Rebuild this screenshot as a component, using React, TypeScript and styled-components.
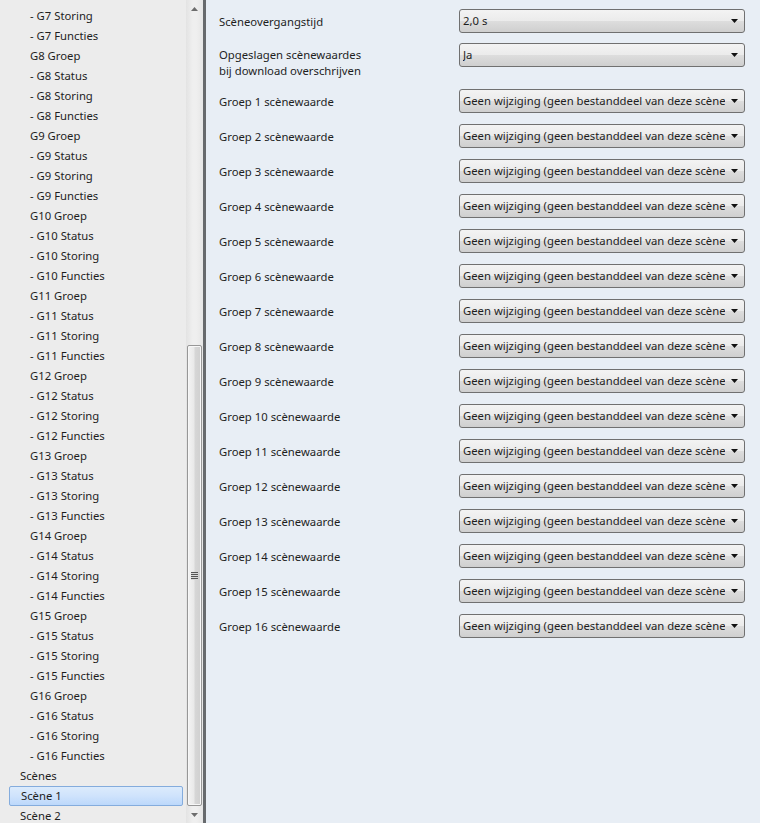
import React from "react";
import styled, { createGlobalStyle } from "styled-components";

const Global = createGlobalStyle`
  html, body { margin: 0; padding: 0; }
  body { font-family: "Noto Sans", "Open Sans", sans-serif; font-size: 11.3px; color: #1e1e1e; overflow: hidden; }
`;

const Shell = styled.div`
  display: flex;
  width: 760px;
  height: 823px;
  overflow: hidden;
`;

const TreePane = styled.div`
  display: flex;
  width: 203px;
  flex: none;
  background: #ececec;
`;

const TreeList = styled.ul`
  list-style: none;
  margin: 0;
  padding: 6px 0 0 0;
  flex: 1;
  overflow: hidden;
`;

const TreeItem = styled.li<{ $level: number; $selected?: boolean }>`
  height: 20px;
  line-height: 20px;
  white-space: nowrap;
  padding-left: ${(p) => (p.$level === 0 ? 20 : 30)}px;
  ${(p) =>
    p.$selected &&
    `
    margin-left: 9px;
    margin-right: 3px;
    padding-left: 11px;
    border: 1px solid #84acdd;
    border-radius: 2px;
    height: 18px;
    line-height: 18px;
    background: linear-gradient(to bottom, #dcebfc 0%, #cfe3fc 50%, #bcd8fb 100%);
  `}
`;

const ScrollBar = styled.div`
  width: 17px;
  flex: none;
  display: flex;
  flex-direction: column;
  background: linear-gradient(to right, #e3e3e3, #efefef 40%, #efefef 60%, #e6e6e6);
`;

const ScrollButton = styled.div`
  height: 17px;
  flex: none;
  display: flex;
  align-items: center;
  justify-content: center;
`;

const ScrollTrack = styled.div<{ $offset: number }>`
  flex: 1;
  display: flex;
  flex-direction: column;
  padding-top: ${(p) => p.$offset}px;
`;

const Thumb = styled.div`
  flex: 1;
  margin: 0 1px;
  border: 1px solid #979797;
  border-radius: 2px;
  background: linear-gradient(to right, #f3f3f3, #e9e9e9 45%, #d6d6d6 55%, #cfcfcf);
  box-shadow: inset 0 0 0 1px #f7f7f7;
  display: flex;
  align-items: center;
  justify-content: center;
`;

const Grip = styled.div`
  width: 7px;
  height: 8px;
  background: repeating-linear-gradient(to bottom, #555 0 1px, #d8d8d8 1px 2px);
`;

const Divider = styled.div`
  width: 3px;
  flex: none;
  background: #676a6d;
`;

const Content = styled.div`
  flex: 1;
  background: #e8eef5;
  padding: 9px 16px 0 13px;
  display: flex;
  flex-direction: column;
  gap: 11px;
`;

const Row = styled.div<{ $tall?: boolean }>`
  display: flex;
  align-items: flex-start;
  margin-top: ${(p) => (p.$tall ? -1 : 0)}px;
`;

const Label = styled.div<{ $tall?: boolean }>`
  width: 240px;
  flex: none;
  padding-top: ${(p) => (p.$tall ? 4 : 5)}px;
  line-height: ${(p) => (p.$tall ? 16 : 15)}px;
  height: ${(p) => (p.$tall ? 31 : 19)}px;
`;

const Select = styled.div`
  width: 286px;
  height: 24px;
  box-sizing: border-box;
  border: 1px solid #707070;
  border-radius: 3px;
  background: linear-gradient(to bottom, #f3f3f3 0%, #ebebeb 50%, #dddddd 51%, #cfcfcf 100%);
  display: flex;
  align-items: center;
  padding-left: 3px;
`;

const SelectText = styled.span`
  flex: 1;
  overflow: hidden;
  white-space: nowrap;
  line-height: 20px;
`;

const Arrow = styled.span`
  width: 19px;
  flex: none;
  display: flex;
  align-items: center;
  justify-content: center;
`;

const Tri = ({ up, color = "#111" }: { up?: boolean; color?: string }) => (
  <svg width="7" height="4" viewBox="0 0 7 4">
    <path d={up ? "M0 4 L3.5 0 L7 4 Z" : "M0 0 L7 0 L3.5 4 Z"} fill={color} />
  </svg>
);

type Item = { text: string; level: number; selected?: boolean };

const items: Item[] = [
  { text: "- G7 Storing", level: 1 },
  { text: "- G7 Functies", level: 1 },
];
for (let g = 8; g <= 16; g++) {
  items.push({ text: `G${g} Groep`, level: 1 });
  items.push({ text: `- G${g} Status`, level: 1 });
  items.push({ text: `- G${g} Storing`, level: 1 });
  items.push({ text: `- G${g} Functies`, level: 1 });
}
items.push({ text: "Scènes", level: 0 });
items.push({ text: "Scène 1", level: 0, selected: true });
items.push({ text: "Scène 2", level: 0 });

const GEEN = "Geen wijziging (geen bestanddeel van deze scène)";

export default function App() {
  const groups = Array.from({ length: 16 }, (_, i) => i + 1);
  return (
    <>
      <Global />
      <Shell>
        <TreePane>
          <TreeList>
            {items.map((it, i) => (
              <TreeItem key={i} $level={it.level} $selected={it.selected}>
                {it.text}
              </TreeItem>
            ))}
          </TreeList>
          <ScrollBar>
            <ScrollButton>
              <Tri up color="#6d6d6d" />
            </ScrollButton>
            <ScrollTrack $offset={328}>
              <Thumb>
                <Grip />
              </Thumb>
            </ScrollTrack>
            <ScrollButton>
              <Tri color="#6d6d6d" />
            </ScrollButton>
          </ScrollBar>
        </TreePane>
        <Divider />
        <Content>
          <Row>
            <Label>Scèneovergangstijd</Label>
            <Select>
              <SelectText>2,0 s</SelectText>
              <Arrow>
                <Tri />
              </Arrow>
            </Select>
          </Row>
          <Row $tall>
            <Label $tall>
              Opgeslagen scènewaardes
              <br />
              bij download overschrijven
            </Label>
            <Select>
              <SelectText>Ja</SelectText>
              <Arrow>
                <Tri />
              </Arrow>
            </Select>
          </Row>
          {groups.map((g) => (
            <Row key={g}>
              <Label>Groep {g} scènewaarde</Label>
              <Select>
                <SelectText>{GEEN}</SelectText>
                <Arrow>
                  <Tri />
                </Arrow>
              </Select>
            </Row>
          ))}
        </Content>
      </Shell>
    </>
  );
}
